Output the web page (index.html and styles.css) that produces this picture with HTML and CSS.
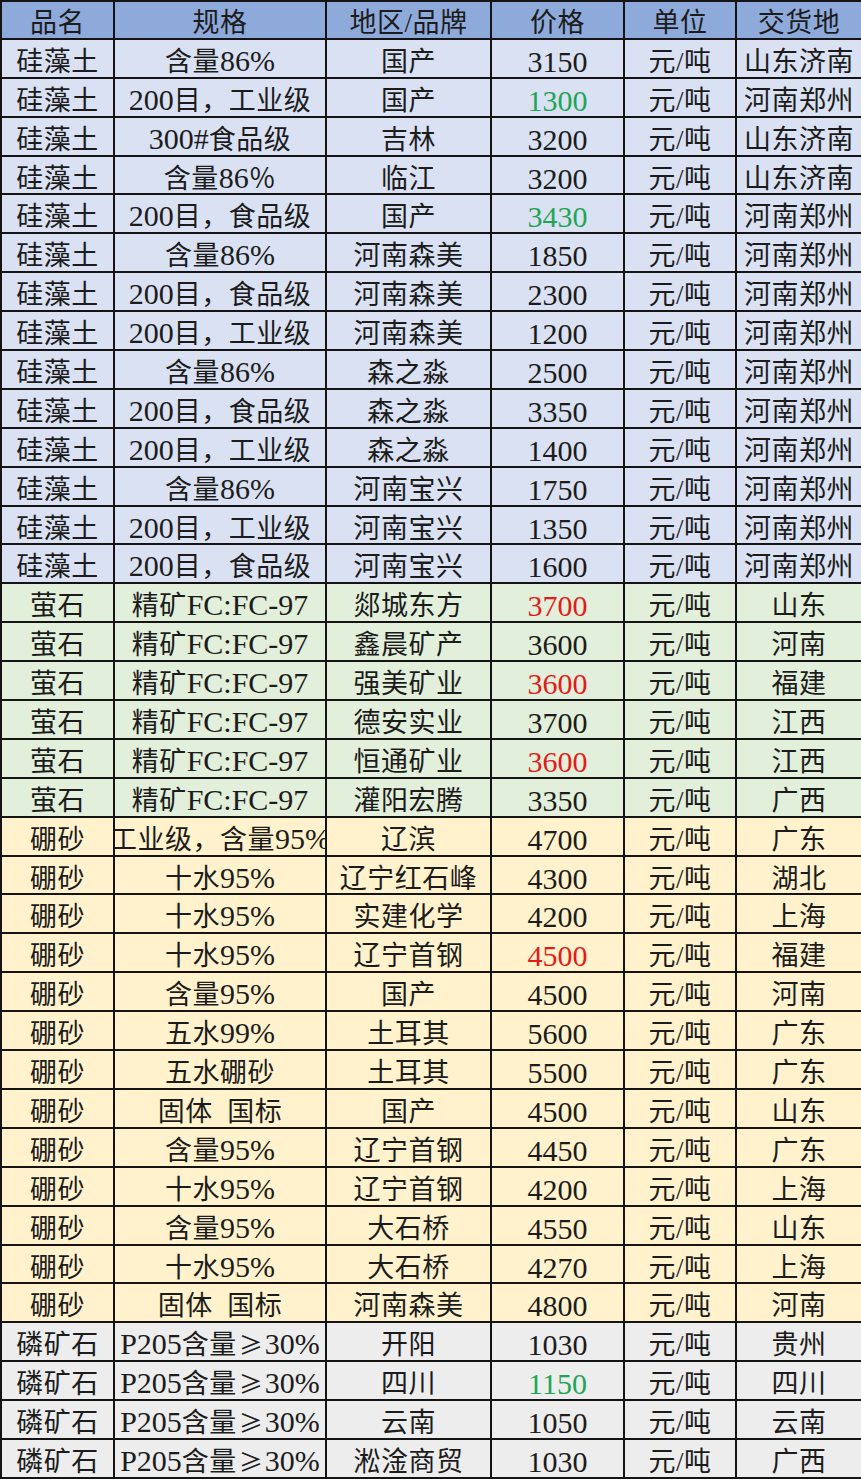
FILE: index.html
```html
<!DOCTYPE html>
<html lang="zh-CN">
<head>
<meta charset="utf-8">
<title>价格表</title>
<link rel="stylesheet" href="styles.css">
</head>
<body>
<table class="price-table">
  <colgroup>
    <col class="c-name"><col class="c-spec"><col class="c-brand"><col class="c-price"><col class="c-unit"><col class="c-place">
  </colgroup>
  <thead>
    <tr><th><div class="cell">品名</div></th><th><div class="cell">规格</div></th><th><div class="cell">地区/品牌</div></th><th><div class="cell">价格</div></th><th><div class="cell">单位</div></th><th><div class="cell">交货地</div></th></tr>
  </thead>
  <tbody>
    <tr class="blue"><td><div class="cell">硅藻土</div></td><td><div class="cell">含量<span class="num">86%</span></div></td><td><div class="cell">国产</div></td><td><div class="cell num">3150</div></td><td><div class="cell">元/吨</div></td><td><div class="cell">山东济南</div></td></tr>
    <tr class="blue"><td><div class="cell">硅藻土</div></td><td><div class="cell"><span class="num">200</span>目，工业级</div></td><td><div class="cell">国产</div></td><td><div class="cell num up">1300</div></td><td><div class="cell">元/吨</div></td><td><div class="cell">河南郑州</div></td></tr>
    <tr class="blue"><td><div class="cell">硅藻土</div></td><td><div class="cell"><span class="num">300#</span>食品级</div></td><td><div class="cell">吉林</div></td><td><div class="cell num">3200</div></td><td><div class="cell">元/吨</div></td><td><div class="cell">山东济南</div></td></tr>
    <tr class="blue"><td><div class="cell">硅藻土</div></td><td><div class="cell">含量<span class="num">86</span>％</div></td><td><div class="cell">临江</div></td><td><div class="cell num">3200</div></td><td><div class="cell">元/吨</div></td><td><div class="cell">山东济南</div></td></tr>
    <tr class="blue"><td><div class="cell">硅藻土</div></td><td><div class="cell"><span class="num">200</span>目，食品级</div></td><td><div class="cell">国产</div></td><td><div class="cell num up">3430</div></td><td><div class="cell">元/吨</div></td><td><div class="cell">河南郑州</div></td></tr>
    <tr class="blue"><td><div class="cell">硅藻土</div></td><td><div class="cell">含量<span class="num">86%</span></div></td><td><div class="cell">河南森美</div></td><td><div class="cell num">1850</div></td><td><div class="cell">元/吨</div></td><td><div class="cell">河南郑州</div></td></tr>
    <tr class="blue"><td><div class="cell">硅藻土</div></td><td><div class="cell"><span class="num">200</span>目，食品级</div></td><td><div class="cell">河南森美</div></td><td><div class="cell num">2300</div></td><td><div class="cell">元/吨</div></td><td><div class="cell">河南郑州</div></td></tr>
    <tr class="blue"><td><div class="cell">硅藻土</div></td><td><div class="cell"><span class="num">200</span>目，工业级</div></td><td><div class="cell">河南森美</div></td><td><div class="cell num">1200</div></td><td><div class="cell">元/吨</div></td><td><div class="cell">河南郑州</div></td></tr>
    <tr class="blue"><td><div class="cell">硅藻土</div></td><td><div class="cell">含量<span class="num">86%</span></div></td><td><div class="cell">森之淼</div></td><td><div class="cell num">2500</div></td><td><div class="cell">元/吨</div></td><td><div class="cell">河南郑州</div></td></tr>
    <tr class="blue"><td><div class="cell">硅藻土</div></td><td><div class="cell"><span class="num">200</span>目，食品级</div></td><td><div class="cell">森之淼</div></td><td><div class="cell num">3350</div></td><td><div class="cell">元/吨</div></td><td><div class="cell">河南郑州</div></td></tr>
    <tr class="blue"><td><div class="cell">硅藻土</div></td><td><div class="cell"><span class="num">200</span>目，工业级</div></td><td><div class="cell">森之淼</div></td><td><div class="cell num">1400</div></td><td><div class="cell">元/吨</div></td><td><div class="cell">河南郑州</div></td></tr>
    <tr class="blue"><td><div class="cell">硅藻土</div></td><td><div class="cell">含量<span class="num">86%</span></div></td><td><div class="cell">河南宝兴</div></td><td><div class="cell num">1750</div></td><td><div class="cell">元/吨</div></td><td><div class="cell">河南郑州</div></td></tr>
    <tr class="blue"><td><div class="cell">硅藻土</div></td><td><div class="cell"><span class="num">200</span>目，工业级</div></td><td><div class="cell">河南宝兴</div></td><td><div class="cell num">1350</div></td><td><div class="cell">元/吨</div></td><td><div class="cell">河南郑州</div></td></tr>
    <tr class="blue"><td><div class="cell">硅藻土</div></td><td><div class="cell"><span class="num">200</span>目，食品级</div></td><td><div class="cell">河南宝兴</div></td><td><div class="cell num">1600</div></td><td><div class="cell">元/吨</div></td><td><div class="cell">河南郑州</div></td></tr>
    <tr class="green"><td><div class="cell">萤石</div></td><td><div class="cell">精矿<span class="num">FC:FC-97</span></div></td><td><div class="cell">郯城东方</div></td><td><div class="cell num down">3700</div></td><td><div class="cell">元/吨</div></td><td><div class="cell">山东</div></td></tr>
    <tr class="green"><td><div class="cell">萤石</div></td><td><div class="cell">精矿<span class="num">FC:FC-97</span></div></td><td><div class="cell">鑫晨矿产</div></td><td><div class="cell num">3600</div></td><td><div class="cell">元/吨</div></td><td><div class="cell">河南</div></td></tr>
    <tr class="green"><td><div class="cell">萤石</div></td><td><div class="cell">精矿<span class="num">FC:FC-97</span></div></td><td><div class="cell">强美矿业</div></td><td><div class="cell num down">3600</div></td><td><div class="cell">元/吨</div></td><td><div class="cell">福建</div></td></tr>
    <tr class="green"><td><div class="cell">萤石</div></td><td><div class="cell">精矿<span class="num">FC:FC-97</span></div></td><td><div class="cell">德安实业</div></td><td><div class="cell num">3700</div></td><td><div class="cell">元/吨</div></td><td><div class="cell">江西</div></td></tr>
    <tr class="green"><td><div class="cell">萤石</div></td><td><div class="cell">精矿<span class="num">FC:FC-97</span></div></td><td><div class="cell">恒通矿业</div></td><td><div class="cell num down">3600</div></td><td><div class="cell">元/吨</div></td><td><div class="cell">江西</div></td></tr>
    <tr class="green"><td><div class="cell">萤石</div></td><td><div class="cell">精矿<span class="num">FC:FC-97</span></div></td><td><div class="cell">灌阳宏腾</div></td><td><div class="cell num">3350</div></td><td><div class="cell">元/吨</div></td><td><div class="cell">广西</div></td></tr>
    <tr class="yellow"><td><div class="cell">硼砂</div></td><td><div class="cell clip"><span class="run">工业级，含量<span class="num">95%</span></span></div></td><td><div class="cell">辽滨</div></td><td><div class="cell num">4700</div></td><td><div class="cell">元/吨</div></td><td><div class="cell">广东</div></td></tr>
    <tr class="yellow"><td><div class="cell">硼砂</div></td><td><div class="cell">十水<span class="num">95%</span></div></td><td><div class="cell">辽宁红石峰</div></td><td><div class="cell num">4300</div></td><td><div class="cell">元/吨</div></td><td><div class="cell">湖北</div></td></tr>
    <tr class="yellow"><td><div class="cell">硼砂</div></td><td><div class="cell">十水<span class="num">95%</span></div></td><td><div class="cell">实建化学</div></td><td><div class="cell num">4200</div></td><td><div class="cell">元/吨</div></td><td><div class="cell">上海</div></td></tr>
    <tr class="yellow"><td><div class="cell">硼砂</div></td><td><div class="cell">十水<span class="num">95%</span></div></td><td><div class="cell">辽宁首钢</div></td><td><div class="cell num down">4500</div></td><td><div class="cell">元/吨</div></td><td><div class="cell">福建</div></td></tr>
    <tr class="yellow"><td><div class="cell">硼砂</div></td><td><div class="cell">含量<span class="num">95%</span></div></td><td><div class="cell">国产</div></td><td><div class="cell num">4500</div></td><td><div class="cell">元/吨</div></td><td><div class="cell">河南</div></td></tr>
    <tr class="yellow"><td><div class="cell">硼砂</div></td><td><div class="cell">五水<span class="num">99%</span></div></td><td><div class="cell">土耳其</div></td><td><div class="cell num">5600</div></td><td><div class="cell">元/吨</div></td><td><div class="cell">广东</div></td></tr>
    <tr class="yellow"><td><div class="cell">硼砂</div></td><td><div class="cell">五水硼砂</div></td><td><div class="cell">土耳其</div></td><td><div class="cell num">5500</div></td><td><div class="cell">元/吨</div></td><td><div class="cell">广东</div></td></tr>
    <tr class="yellow"><td><div class="cell">硼砂</div></td><td><div class="cell">固体&nbsp; 国标</div></td><td><div class="cell">国产</div></td><td><div class="cell num">4500</div></td><td><div class="cell">元/吨</div></td><td><div class="cell">山东</div></td></tr>
    <tr class="yellow"><td><div class="cell">硼砂</div></td><td><div class="cell">含量<span class="num">95%</span></div></td><td><div class="cell">辽宁首钢</div></td><td><div class="cell num">4450</div></td><td><div class="cell">元/吨</div></td><td><div class="cell">广东</div></td></tr>
    <tr class="yellow"><td><div class="cell">硼砂</div></td><td><div class="cell">十水<span class="num">95%</span></div></td><td><div class="cell">辽宁首钢</div></td><td><div class="cell num">4200</div></td><td><div class="cell">元/吨</div></td><td><div class="cell">上海</div></td></tr>
    <tr class="yellow"><td><div class="cell">硼砂</div></td><td><div class="cell">含量<span class="num">95%</span></div></td><td><div class="cell">大石桥</div></td><td><div class="cell num">4550</div></td><td><div class="cell">元/吨</div></td><td><div class="cell">山东</div></td></tr>
    <tr class="yellow"><td><div class="cell">硼砂</div></td><td><div class="cell">十水<span class="num">95%</span></div></td><td><div class="cell">大石桥</div></td><td><div class="cell num">4270</div></td><td><div class="cell">元/吨</div></td><td><div class="cell">上海</div></td></tr>
    <tr class="yellow"><td><div class="cell">硼砂</div></td><td><div class="cell">固体&nbsp; 国标</div></td><td><div class="cell">河南森美</div></td><td><div class="cell num">4800</div></td><td><div class="cell">元/吨</div></td><td><div class="cell">河南</div></td></tr>
    <tr class="grey"><td><div class="cell">磷矿石</div></td><td><div class="cell"><span class="num">P205</span>含量<span class="op">≥</span><span class="num">30%</span></div></td><td><div class="cell">开阳</div></td><td><div class="cell num">1030</div></td><td><div class="cell">元/吨</div></td><td><div class="cell">贵州</div></td></tr>
    <tr class="grey"><td><div class="cell">磷矿石</div></td><td><div class="cell"><span class="num">P205</span>含量<span class="op">≥</span><span class="num">30%</span></div></td><td><div class="cell">四川</div></td><td><div class="cell num up">1150</div></td><td><div class="cell">元/吨</div></td><td><div class="cell">四川</div></td></tr>
    <tr class="grey"><td><div class="cell">磷矿石</div></td><td><div class="cell"><span class="num">P205</span>含量<span class="op">≥</span><span class="num">30%</span></div></td><td><div class="cell">云南</div></td><td><div class="cell num">1050</div></td><td><div class="cell">元/吨</div></td><td><div class="cell">云南</div></td></tr>
    <tr class="grey"><td><div class="cell">磷矿石</div></td><td><div class="cell"><span class="num">P205</span>含量<span class="op">≥</span><span class="num">30%</span></div></td><td><div class="cell">淞淦商贸</div></td><td><div class="cell num">1030</div></td><td><div class="cell">元/吨</div></td><td><div class="cell">广西</div></td></tr>
  </tbody>
</table>
</body>
</html>
```

FILE: styles.css
```css
html, body {
  margin: 0;
  padding: 0;
  background: #ffffff;
}

.price-table {
  width: 861px;
  border-collapse: collapse;
  table-layout: fixed;
  font-family: "Liberation Serif", "Noto Sans CJK SC", serif;
  font-size: 27px;
  color: #1c1c1c;
}

.c-name { width: 113px; }
.c-spec { width: 212px; }
.c-brand { width: 165px; }
.c-price { width: 133px; }
.c-unit { width: 112px; }
.c-place { width: 126px; }

.price-table th,
.price-table td {
  border: 2px solid #141414;
  padding: 0;
  height: 36.9px;
  font-weight: normal;
}

.price-table thead th {
  height: 35.9px;
  background: #8eaadb;
}

.cell {
  box-sizing: border-box;
  height: 36.9px;
  padding-top: 8px;
  line-height: 28.9px;
  text-align: center;
  overflow: hidden;
  white-space: nowrap;
  letter-spacing: 0.5px;
}

.price-table thead .cell {
  height: 35.9px;
  padding-top: 8px;
  line-height: 27.9px;
}

.num {
  font-size: 30px;
  line-height: 20px;
  letter-spacing: 0;
}

.cell.num {
  padding-top: 7px;
  line-height: 29.9px;
}

.op {
  font-family: "Noto Sans CJK SC", sans-serif;
  font-size: 24px;
  margin: 0 2px;
  letter-spacing: 0;
  line-height: 20px;
}

.clip {
  display: flex;
  justify-content: center;
}

.run {
  flex: none;
}

.blue td { background: #d9e1f2; }
.green td { background: #e2efda; }
.yellow td { background: #fff2cc; }
.grey td { background: #ededed; }

.up { color: #1fa655; }
.down { color: #e31b1b; }
```
